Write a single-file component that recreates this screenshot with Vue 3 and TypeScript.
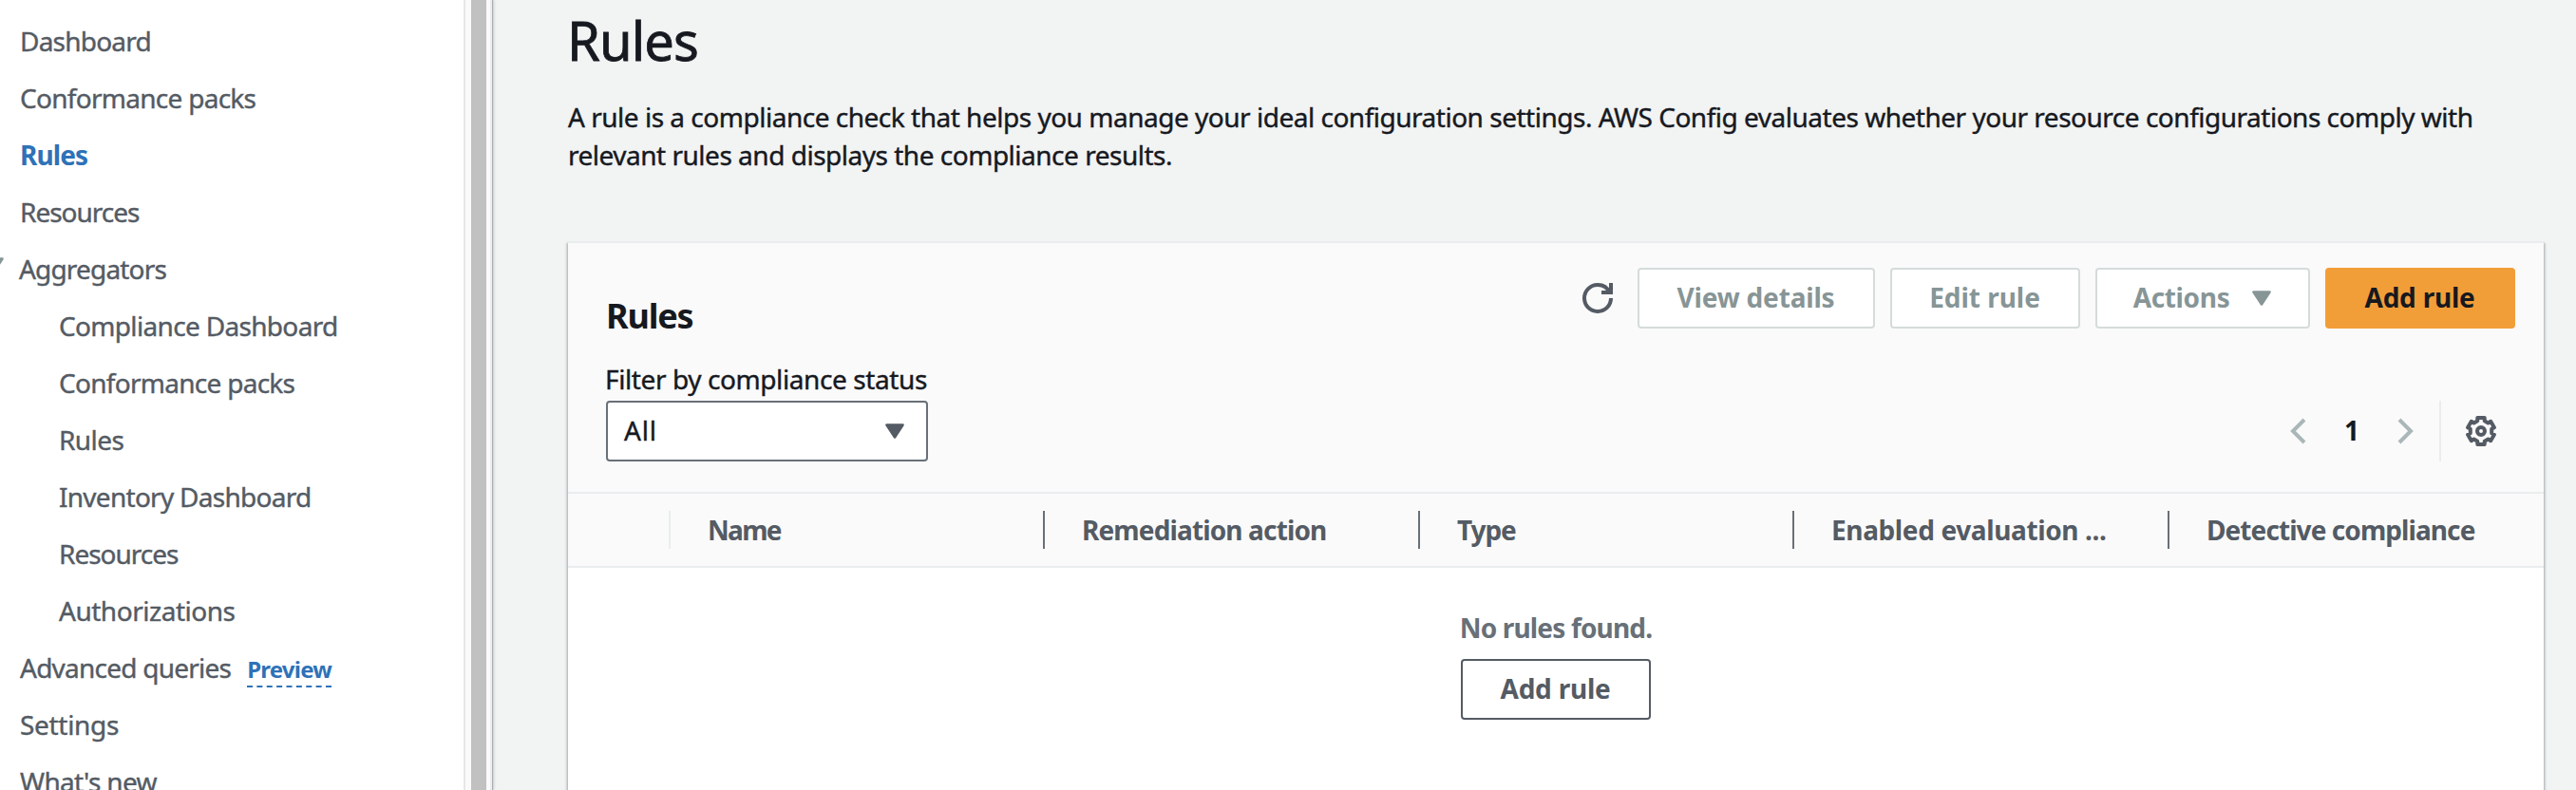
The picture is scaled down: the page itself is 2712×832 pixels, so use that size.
<script setup lang="ts">
interface NavItem {
  label: string
  spacing: number
  kind?: 'active' | 'group' | 'nested'
  tag?: string
}

const navItems: NavItem[] = [
  { label: 'Dashboard', spacing: -0.78 },
  { label: 'Conformance packs', spacing: -0.72 },
  { label: 'Rules', spacing: -0.9, kind: 'active' },
  { label: 'Resources', spacing: -1.01 },
  { label: 'Aggregators', spacing: -0.82, kind: 'group' },
  { label: 'Compliance Dashboard', spacing: -0.67, kind: 'nested' },
  { label: 'Conformance packs', spacing: -0.72, kind: 'nested' },
  { label: 'Rules', spacing: -0.56, kind: 'nested' },
  { label: 'Inventory Dashboard', spacing: -0.72, kind: 'nested' },
  { label: 'Resources', spacing: -1.01, kind: 'nested' },
  { label: 'Authorizations', spacing: -0.48, kind: 'nested' },
  { label: 'Advanced queries', spacing: -0.76, tag: 'Preview' },
  { label: 'Settings', spacing: -0.3 },
  { label: "What's new", spacing: -0.66 },
]

const columns = [
  { label: 'Name', spacing: -1.7 },
  { label: 'Remediation action', spacing: -0.86 },
  { label: 'Type', spacing: -1.09 },
  { label: 'Enabled evaluation ...', spacing: -0.37 },
  { label: 'Detective compliance', spacing: -0.92 },
]

// Six-toothed cog outline on a 16-unit grid
const point = (deg: number, r: number) => {
  const a = (deg * Math.PI) / 180
  return `${(8 + r * Math.sin(a)).toFixed(2)} ${(8 - r * Math.cos(a)).toFixed(2)}`
}
const cog =
  'M' +
  [0, 60, 120, 180, 240, 300]
    .flatMap((t) => [point(t - 19, 5.7), point(t - 15, 7.2), point(t + 15, 7.2), point(t + 19, 5.7)])
    .join('L') +
  'Z'
</script>

<template>
  <div class="screen">
    <nav class="sidebar">
      <a
        v-for="(item, i) in navItems"
        :key="i"
        class="nav-item"
        :class="item.kind"
        :style="{ letterSpacing: item.spacing + 'px' }"
      >
        <svg v-if="item.kind === 'group'" class="nav-caret" viewBox="0 0 20 16">
          <path d="M1.5 1.5h17L10 14.5z" />
        </svg>
        {{ item.label }}
        <span v-if="item.tag" class="tag">{{ item.tag }}</span>
      </a>
    </nav>
    <div class="scroll-track"><div class="scroll-thumb"></div></div>

    <main class="content">
      <h1>Rules</h1>
      <p class="intro">
        A rule is a compliance check that helps you manage your ideal configuration settings. AWS Config evaluates whether your resource configurations comply with<br />
        relevant rules and displays the compliance results.
      </p>

      <section class="card">
        <header class="card-header">
          <div class="filters">
            <h2>Rules</h2>
            <label>Filter by compliance status</label>
            <div class="select">
              <span>All</span>
              <svg class="caret" viewBox="0 0 20 16"><path d="M1.5 1.5h17L10 14.5z" /></svg>
            </div>
          </div>
          <div class="tools">
            <div class="actions">
              <svg class="icon refresh" viewBox="0 0 16 16">
                <path d="M10 5h5V0" />
                <path d="M15 8a6.957 6.957 0 0 1-7 7 6.957 6.957 0 0 1-7-7 6.957 6.957 0 0 1 7-7 6.87 6.87 0 0 1 6.3 4" />
              </svg>
              <button class="btn disabled view">View details</button>
              <button class="btn disabled edit">Edit rule</button>
              <button class="btn disabled menu">
                Actions
                <svg class="caret" viewBox="0 0 20 16"><path d="M1.5 1.5h17L10 14.5z" /></svg>
              </button>
              <button class="btn primary">Add rule</button>
            </div>
            <div class="pagination">
              <svg class="icon arrow" viewBox="0 0 16 16"><path d="M11 2L5 8l6 6" /></svg>
              <span class="page">1</span>
              <svg class="icon arrow" viewBox="0 0 16 16"><path d="M5 2l6 6-6 6" /></svg>
              <span class="divider"></span>
              <svg class="icon cog" viewBox="0 0 16 16">
                <path :d="cog" />
                <circle cx="8" cy="8" r="2" />
              </svg>
            </div>
          </div>
        </header>

        <div class="table-head">
          <div class="cell select-cell"></div>
          <div v-for="col in columns" :key="col.label" class="cell" :style="{ letterSpacing: col.spacing + 'px' }">
            {{ col.label }}
          </div>
        </div>

        <div class="empty">
          <p>No rules found.</p>
          <button class="btn add">Add rule</button>
        </div>
      </section>
    </main>
  </div>
</template>

<style>
body {
  margin: 0;
  overflow: hidden;
}
</style>

<style scoped>
.screen {
  display: flex;
  width: 2712px;
  height: 832px;
  overflow: hidden;
  background: #f2f3f3;
  color: #16191f;
  font-family: 'Noto Sans', 'Open Sans', sans-serif;
  font-size: 28px;
  font-weight: 400;
  -webkit-text-stroke-width: 0.4px;
}

.sidebar {
  box-sizing: border-box;
  width: 490px;
  flex: none;
  padding-top: 13px;
  background: #fff;
  border-right: 2px solid #e8e8e8;
}
.nav-item {
  display: flex;
  align-items: baseline;
  height: 60px;
  line-height: 60px;
  padding-left: 21px;
  color: #545b64;
  white-space: nowrap;
}
.nav-item.active {
  color: #2e72b8;
  font-weight: 700;
  -webkit-text-stroke-width: 0;
}
.nav-item.nested {
  padding-left: 62px;
}
.nav-item.group {
  align-items: center;
  padding-left: 0;
}
.nav-caret {
  width: 20px;
  height: 16px;
  margin: -8px 16px 0 -16px;
  fill: #879596;
  stroke: #879596;
  stroke-width: 2.6;
  stroke-linejoin: round;
}
.tag {
  margin-left: 17px;
  line-height: 34px;
  font-size: 24px;
  font-weight: 700;
  letter-spacing: -0.79px;
  color: #2e72b8;
  border-bottom: 2px dashed #2e72b8;
  -webkit-text-stroke-width: 0;
}

.scroll-track {
  box-sizing: border-box;
  width: 28px;
  flex: none;
  padding-left: 6px;
  background: #fafafa;
  border-right: 2px solid #ededed;
  box-shadow: 1px 0 1px #a9afb3, 2px 0 3px rgba(0, 28, 36, 0.15);
}
.scroll-thumb {
  width: 16px;
  height: 100%;
  background: #c1c1c1;
}

.content {
  flex: 1;
  padding: 6px 34px 0 80px;
}
h1 {
  margin: 0 0 25px -1px;
  font-size: 56px;
  font-weight: 400;
  line-height: 72px;
  letter-spacing: -0.87px;
  -webkit-text-stroke-width: 0.8px;
}
.intro {
  margin: 0 0 71px;
  line-height: 40px;
  letter-spacing: -0.489px;
  white-space: nowrap;
}

.card {
  height: 700px;
  background: #fff;
  border-top: 2px solid #eaeded;
  box-shadow: 0 2px 2px rgba(0, 28, 36, 0.3), 2px 2px 2px rgba(0, 28, 36, 0.15), -2px 2px 2px rgba(0, 28, 36, 0.15);
}
.card-header {
  box-sizing: border-box;
  display: flex;
  justify-content: space-between;
  height: 262px;
  padding: 26px 30px 32px 40px;
  background: #fafafa;
}
.filters {
  display: flex;
  flex-direction: column;
  padding-top: 29px;
}
h2 {
  margin: 0 0 24px;
  font-size: 36px;
  font-weight: 700;
  line-height: 44px;
  letter-spacing: -1.18px;
  -webkit-text-stroke-width: 0;
}
label {
  margin: 0 0 3px -1px;
  line-height: 40px;
  letter-spacing: -0.4px;
  white-space: nowrap;
}
.select {
  box-sizing: border-box;
  display: flex;
  align-items: center;
  justify-content: space-between;
  width: 339px;
  height: 64px;
  padding: 0 23px 2px 17px;
  background: #fff;
  border: 2px solid #687078;
  border-radius: 4px;
  letter-spacing: 0.8px;
}
.caret {
  width: 20px;
  height: 16px;
  fill: #545b64;
  stroke: #545b64;
  stroke-width: 2.6;
  stroke-linejoin: round;
}
.select .caret {
  margin-top: 2px;
}

.tools {
  display: flex;
  flex-direction: column;
  justify-content: space-between;
  align-items: flex-end;
}
.actions {
  display: flex;
  align-items: center;
  gap: 16px;
}
.icon {
  width: 32px;
  height: 32px;
  fill: none;
  stroke: #545b64;
  stroke-width: 2;
}
.refresh {
  margin-right: 10px;
}
.btn {
  box-sizing: border-box;
  display: flex;
  align-items: center;
  justify-content: center;
  height: 64px;
  padding: 0 1px 2px 0;
  border: 2px solid #545b64;
  border-radius: 4px;
  background: #fff;
  color: #545b64;
  font: inherit;
  font-weight: 700;
  white-space: nowrap;
  -webkit-text-stroke-width: 0;
}
.btn.disabled {
  border-color: #d5dbdb;
  color: #879596;
}
.btn.disabled .caret {
  margin: 2px 0 0 24px;
  fill: #879596;
  stroke: #879596;
}
.view {
  width: 250px;
  letter-spacing: -0.18px;
}
.edit {
  width: 200px;
  letter-spacing: -0.03px;
}
.menu {
  width: 226px;
  letter-spacing: -0.34px;
}
.btn.primary {
  width: 200px;
  border-color: #f29e38;
  background: #f29e38;
  color: #16191f;
  letter-spacing: -0.23px;
}

.pagination {
  display: flex;
  align-items: center;
  height: 64px;
  padding-right: 20px;
}
.arrow {
  stroke: #aab7b8;
}
.page {
  width: 80px;
  padding-bottom: 2px;
  font-weight: 700;
  text-align: center;
  -webkit-text-stroke-width: 0;
}
.divider {
  width: 2px;
  height: 64px;
  margin: 0 26px 0 20px;
  background: #eaeded;
}
.cog {
  stroke-linejoin: round;
}

.table-head {
  display: grid;
  grid-template-columns: 108px 394px 395px 394px 395px 394px;
  align-items: center;
  height: 76px;
  background: #fafafa;
  border-top: 2px solid #eaeded;
  border-bottom: 2px solid #eaeded;
}
.cell {
  height: 40px;
  padding-left: 39px;
  border-right: 2px solid #687078;
  line-height: 40px;
  font-weight: 700;
  color: #545b64;
  white-space: nowrap;
  -webkit-text-stroke-width: 0;
}
.cell.select-cell {
  border-right-color: #eaeded;
}
.cell:last-child {
  border-right: 0;
}

.empty {
  display: flex;
  flex-direction: column;
  align-items: center;
  padding-top: 43px;
}
.empty p {
  margin: 0 0 13px;
  line-height: 40px;
  font-weight: 700;
  letter-spacing: -0.83px;
  color: #687078;
  -webkit-text-stroke-width: 0;
}
.add {
  width: 200px;
  letter-spacing: -0.23px;
}
</style>
